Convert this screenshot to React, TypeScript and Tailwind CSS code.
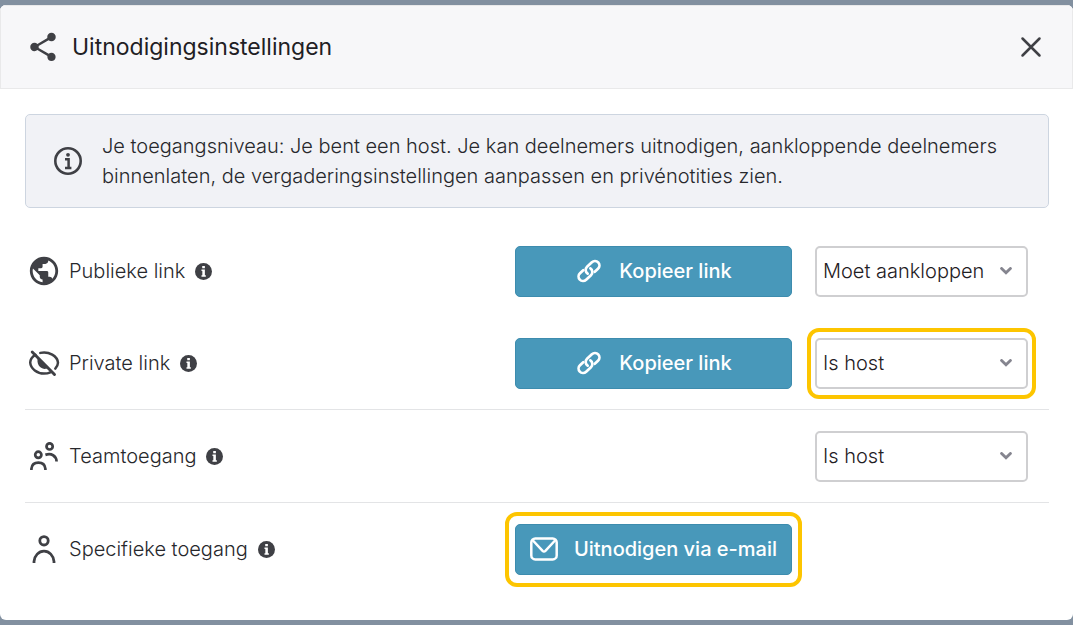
import type { ReactNode } from "react";
import { MdPublic, MdShare } from "react-icons/md";

function InfoOutlineIcon() {
  return (
    <svg viewBox="0 0 28 28" className="size-7 shrink-0" fill="none" aria-hidden="true">
      <circle cx="14" cy="14" r="12.7" stroke="currentColor" strokeWidth="2.6" />
      <circle cx="14" cy="7.8" r="1.9" fill="currentColor" />
      <path d="M11 12.3H14.6V20.8M11 20.9H17.4" stroke="currentColor" strokeWidth="2.5" />
    </svg>
  );
}

function InfoSolidIcon() {
  return (
    <svg viewBox="0 0 16 16" className="size-[17px]" aria-hidden="true">
      <circle cx="8" cy="8" r="8" fill="currentColor" />
      <path d="M6.8 2.9h2.5v2H6.8zM6.1 6.2h3.2v5.3h.9v1.4H6.1v-1.4h.8V7.6h-.8z" fill="#fff" />
    </svg>
  );
}

function EyeOffIcon() {
  return (
    <svg viewBox="0 0 32 28" className="h-7 w-8" fill="none" stroke="currentColor" strokeWidth="2.5" strokeLinecap="round" aria-hidden="true">
      <path d="M7.4 5.8C4.6 7.6 2.4 10.3 2.2 13.5C2.6 20 9.5 24.6 16 24.6C18.3 24.6 20.4 24.200 22.3 23.3" />
      <path d="M12.3 3.9C21 2 29.5 7.2 30 13.8C29.9 15.9 29 17.900 27.3 19.6" />
      <path d="M9.9 8.600C8.200 14.500 11.600 19.900 16.500 19.900C18.200 19.900 20 19.300 21 18.600Z" fill="currentColor" stroke="none" />
      <path d="M4.200 3L26.500 25.500" strokeWidth="2.900" />
    </svg>
  );
}

function TeamIcon() {
  return (
    <svg viewBox="0 0 28 28" className="size-7" fill="none" stroke="currentColor" strokeWidth="2.7" aria-hidden="true">
      <circle cx="8.3" cy="12.8" r="3.1" />
      <path d="M1.4 28V26.8C1.8 22.9 4.700 20.700 8.400 20.700S15 22.900 15.400 26.800V28" />
      <circle cx="19.600" cy="4.400" r="3.100" />
      <path d="M15.400 12.900C21.300 10.900 26.200 13.600 26.600 19.500" />
    </svg>
  );
}

function PersonIcon() {
  return (
    <svg viewBox="0 0 28 28" className="size-7" fill="none" stroke="currentColor" strokeWidth="2.800" aria-hidden="true">
      <circle cx="14" cy="5.800" r="4.200" />
      <path d="M4 28V26.500C4.500 20.600 8.700 16.200 14 16.200S23.500 20.600 24 26.500V28" />
    </svg>
  );
}

function LinkIcon() {
  return (
    <svg viewBox="0 0 28 28" className="size-7" fill="none" stroke="currentColor" strokeWidth="2.700" strokeLinecap="round" aria-hidden="true">
      <g transform="rotate(-43 14 14)">
        <path d="M10.300 9.500H5.900a4.500 4.500 0 0 0 0 9H12.500a4.500 4.500 0 0 0 4.300-5.500" />
        <path d="M17.700 18.500H22.100a4.500 4.500 0 0 0 0-9H15.500a4.500 4.500 0 0 0-4.300 5.500" />
      </g>
    </svg>
  );
}

function MailIcon() {
  return (
    <svg viewBox="0 0 28 28" className="size-7" fill="none" stroke="currentColor" strokeWidth="2.500" strokeLinejoin="round" aria-hidden="true">
      <rect x="1.300" y="3.400" width="25.400" height="21" rx="4" />
      <path d="M2.500 5L12.600 15.800Q14 17.200 15.400 15.800L25.500 5" />
    </svg>
  );
}

function Row({ icon, label, action, access, divided }: {
  icon: ReactNode;
  label: string;
  action?: ReactNode;
  access?: ReactNode;
  divided?: boolean;
}) {
  return (
    <div className={divided ? "border-b border-[#e3e4e6]" : ""}>
      <div className="grid h-[92px] grid-cols-[minmax(0,1fr)_277px_213px] items-center gap-x-[23px] pr-[21px]">
        <div className="flex items-center">
          <span className="flex w-[38px] shrink-0 justify-center text-[#3f4045]">{icon}</span>
          <span className="ml-1.5 whitespace-nowrap">{label}</span>
          <button type="button" aria-label={`Info: ${label}`} className="ml-2.5 text-[#3f4045]">
            <InfoSolidIcon />
          </button>
        </div>
        <div>{action}</div>
        <div>{access}</div>
      </div>
    </div>
  );
}

function ActionButton({ icon, children }: { icon: ReactNode; children: ReactNode }) {
  return (
    <button type="button" className="flex h-[51px] w-full items-center justify-center gap-4 rounded-[5px] border border-[#3d8cae] bg-[#4898ba] font-medium whitespace-nowrap text-white">
      {icon}
      {children}
    </button>
  );
}

function AccessSelect({ label, value }: { label: string; value: string }) {
  return (
    <div className="relative">
      <select aria-label={label} defaultValue={value} className="h-[51px] w-full appearance-none rounded-[5px] border-2 border-[#cfcfd1] bg-white pr-9 pl-1.5 text-[#1f2024]">
        <option>Moet aankloppen</option>
        <option>Is host</option>
      </select>
      <svg viewBox="0 0 12 8" className="pointer-events-none absolute top-1/2 right-4 h-2 w-3 -translate-y-1/2" fill="none" stroke="#85858f" strokeWidth="2.900" aria-hidden="true">
        <path d="M1.600 1.500L6 5.700L10.400 1.500" strokeLinecap="round" />
      </svg>
    </div>
  );
}

export default function App() {
  return (
    <div className="min-h-screen bg-[#8290a0] py-[5px] font-['Inter',sans-serif] text-[20px] font-light text-[#27282c]">
      <section role="dialog" aria-labelledby="title" className="overflow-hidden rounded-md bg-white">
        <header className="flex h-[84px] items-center border border-[#e9e9ea] bg-[#f7f7f9] pr-7 pl-[25px] text-[#3f4045]">
          <MdShare className="size-[34px]" />
          <h1 id="title" className="ml-3 text-[23px] font-normal text-[#1f2024]">Uitnodigingsinstellingen</h1>
          <button type="button" aria-label="Sluiten" className="ml-auto">
            <svg viewBox="0 0 26 26" className="size-[26px]" fill="none" stroke="currentColor" strokeWidth="2.500" strokeLinecap="round" aria-hidden="true">
              <path d="M4.500 4.500L21.500 21.500M21.500 4.500L4.500 21.500" />
            </svg>
          </button>
        </header>
        <main className="py-[25px] pr-6 pl-[25px]">
          <div className="mb-[17px] flex items-center gap-5 rounded-[5px] border border-[#cdd5e0] bg-[#f1f2f6] px-7 py-4 text-[#3f4045]">
            <InfoOutlineIcon />
            <p className="leading-[30px] text-[#27282c]">
              Je toegangsniveau: Je bent een host. Je kan deelnemers uitnodigen, aankloppende deelnemers binnenlaten, de vergaderingsinstellingen aanpassen en privénotities zien.
            </p>
          </div>
          <Row
            icon={<MdPublic className="size-[34px]" />}
            label="Publieke link"
            action={<ActionButton icon={<LinkIcon />}>Kopieer link</ActionButton>}
            access={<AccessSelect label="Toegang via publieke link" value="Moet aankloppen" />}
          />
          <Row
            divided
            icon={<EyeOffIcon />}
            label="Private link"
            action={<ActionButton icon={<LinkIcon />}>Kopieer link</ActionButton>}
            access={
              <div className="relative">
                <AccessSelect label="Toegang via private link" value="Is host" />
                <div className="pointer-events-none absolute -inset-x-2 -inset-y-2.5 rounded-xl border-4 border-[#fdc500]" />
              </div>
            }
          />
          <Row
            divided
            icon={<TeamIcon />}
            label="Teamtoegang"
            access={<AccessSelect label="Toegang voor team" value="Is host" />}
          />
          <Row
            icon={<PersonIcon />}
            label="Specifieke toegang"
            action={
              <div className="relative">
                <ActionButton icon={<MailIcon />}>Uitnodigen via e-mail</ActionButton>
                <div className="pointer-events-none absolute -inset-x-2.5 -inset-y-3 rounded-xl border-4 border-[#fdc500]" />
              </div>
            }
          />
        </main>
      </section>
    </div>
  );
}
